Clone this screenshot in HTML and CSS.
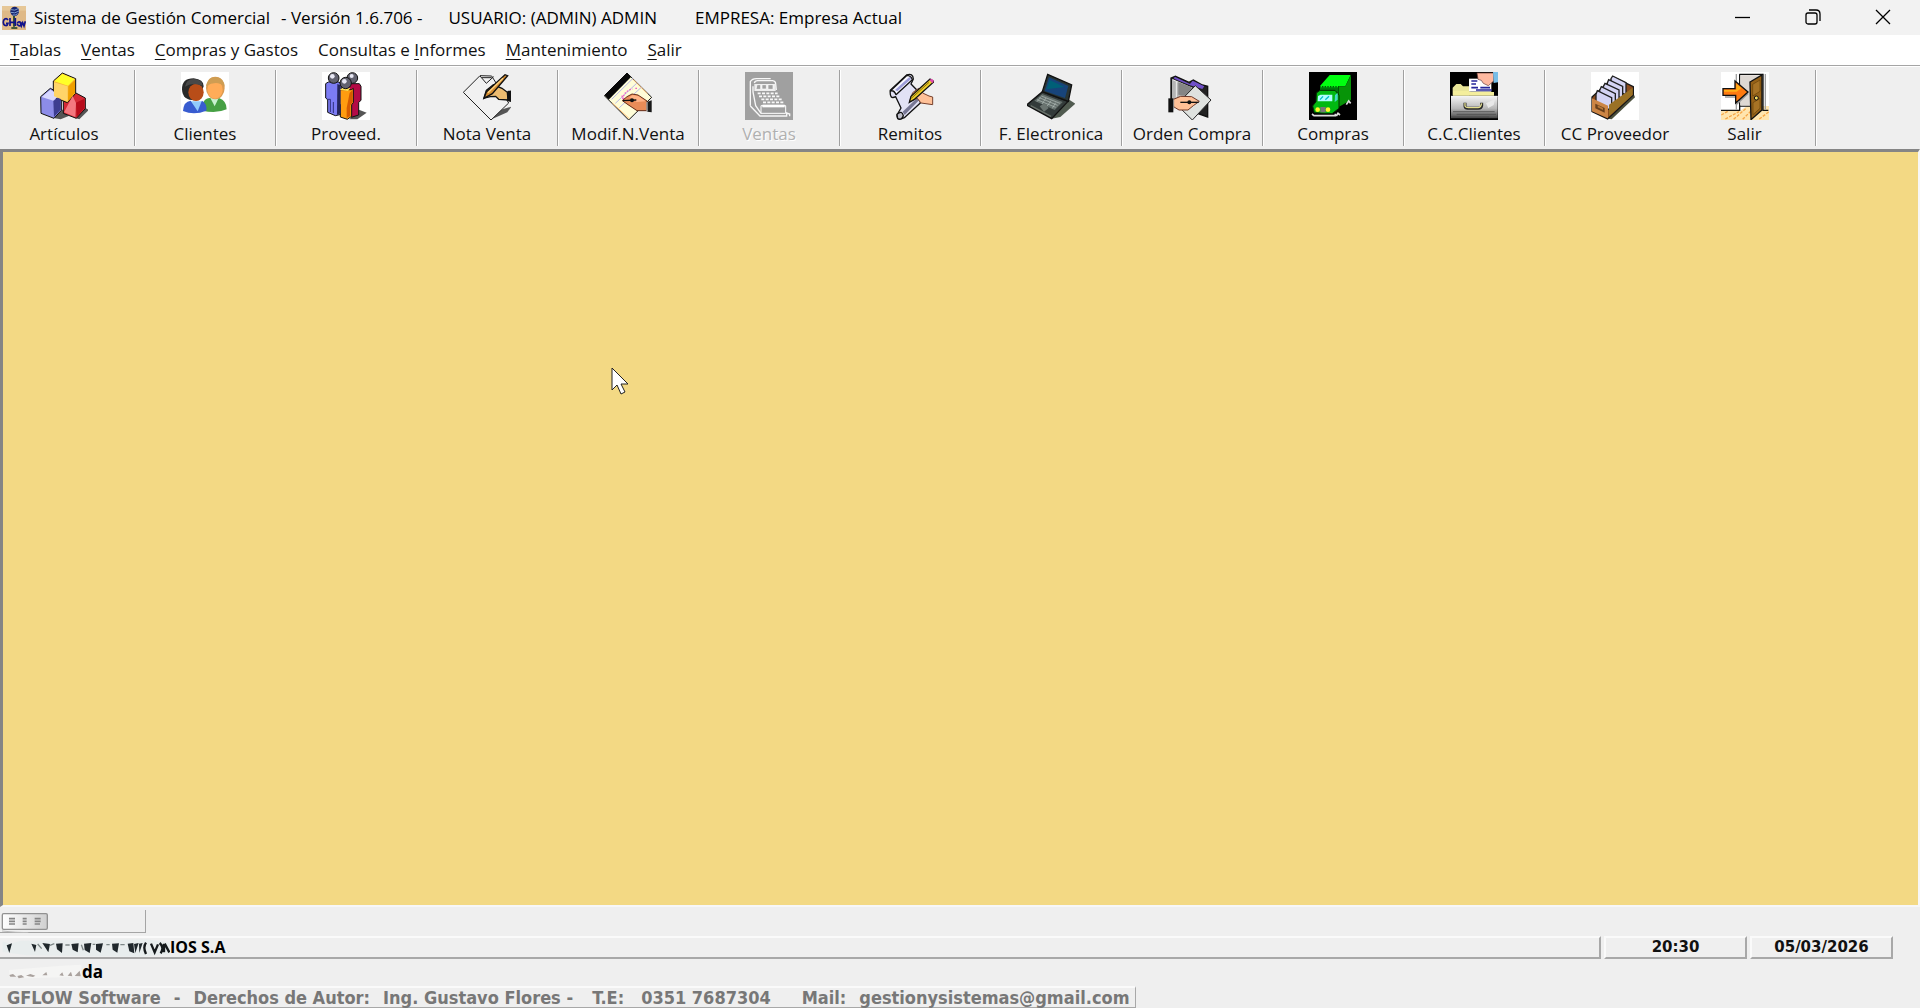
FILE: index.html
```html
<!DOCTYPE html>
<html lang="es">
<head>
<meta charset="utf-8">
<title>Sistema de Gestión Comercial</title>
<link rel="stylesheet" href="styles.css">
</head>
<body>
<div class="window">
  <header class="titlebar">
    <svg class="app-icon" viewBox="0 0 72 72" aria-hidden="true">
      <rect width="72" height="72" fill="#dfb987"/>
      <path d="M0 0H72V14H0Z" fill="#e6c797"/>
      <ellipse cx="38" cy="16" rx="13" ry="14" fill="#16246e"/>
      <path d="M27 11Q38 16 50 7M26 19Q38 24 51 15M32 27Q40 29 47 23" fill="none" stroke="#7c9cd0" stroke-width="3"/>
      <path d="M36 30V62M28 66H46" stroke="#143c22" stroke-width="5"/>
      <path d="M18 42C12 34 3 40 4 50S16 62 18 52H12M24 36V60M24 49H38M40 36V60M46 54A6 6 0 1 0 46 53M54 47L58 60L62 50L66 60L70 46" fill="none" stroke="#10128c" stroke-width="5"/>
    </svg>
    <h1 class="title"><span>Sistema de Gestión Comercial</span><span class="version">- Versión 1.6.706 -</span><span class="user">USUARIO: (ADMIN) ADMIN</span><span>EMPRESA: Empresa Actual</span></h1>
    <div class="window-controls">
      <button type="button" aria-label="Minimizar"><svg viewBox="0 0 16 16"><path d="M0 8.500H15"/></svg></button>
      <button type="button" aria-label="Restaurar"><svg viewBox="0 0 16 16"><rect x="1" y="4" width="11" height="11" rx="2"/><path d="M4 1H11Q15 1 15 5V12"/></svg></button>
      <button type="button" aria-label="Cerrar"><svg viewBox="0 0 16 16"><path d="M1 1L15 15M15 1L1 15"/></svg></button>
    </div>
  </header>

  <nav class="menubar">
    <button type="button"><u>T</u>ablas</button>
    <button type="button"><u>V</u>entas</button>
    <button type="button"><u>C</u>ompras y Gastos</button>
    <button type="button">Consultas e <u>I</u>nformes</button>
    <button type="button"><u>M</u>antenimiento</button>
    <button type="button"><u>S</u>alir</button>
  </nav>

  <div class="toolbar" role="toolbar">
    <button type="button" class="tool first">
      <svg viewBox="120 18 144 144" aria-hidden="true">
        <path d="M160 156L186 130L206 150L182 160ZM226 156L256 126L266 132L238 160Z" fill="#555"/>
        <g stroke="#111" stroke-width="3" stroke-linejoin="round">
          <path d="M122 92L151 67L184 85V133L162 157L123 142Z" fill="#8c8ce8"/>
          <path d="M190 103L222 78L256 96V128L229 157L190 142Z" fill="#d42a36"/>
          <path d="M160 45L187 21L227 38V82L202 110L160 93Z" fill="#f8b838"/>
        </g>
        <path d="M125 93L151 71L180 86L160 104Z" fill="#d8d8ff"/><path d="M160 105L182 88V131L162 153Z" fill="#3c3c90"/>
        <path d="M192 139L218 90L228 111L226 153Z" fill="#f47880"/><path d="M228 110L253 98V127L230 153Z" fill="#b80c1c"/>
        <path d="M163 46L187 24L224 39L204 59Z" fill="#ffff28"/><path d="M162 49L203 61V107L162 91Z" fill="#ffd468"/><path d="M205 61L225 42V80L204 106Z" fill="#f0a000"/>
      </svg><span>Artículos</span></button>
    <button type="button" class="tool">
      <svg viewBox="544 18 144 144" aria-hidden="true">
        <rect x="544" y="18" width="144" height="144" fill="#fff"/>
        <path d="M608 134Q605 98 631 96H658Q681 104 681 130Q650 144 608 134Z" fill="#46a044"/>
        <path d="M632 96L645 121L657 96Z" fill="#c8f0d0"/>
        <ellipse cx="647" cy="66" rx="28" ry="34" fill="#dc9a50"/><ellipse cx="646" cy="71" rx="23" ry="27" fill="#ffac58"/>
        <path d="M619 61Q624 31 650 33Q674 37 675 62Q651 40 619 61Z" fill="#cf9d52"/>
        <path d="M547 71Q546 37 582 37Q612 40 612 61L596 102Q549 107 547 71Z" fill="#292929"/>
        <ellipse cx="589" cy="79" rx="23" ry="26" fill="#b84d18"/>
        <path d="M556 62Q576 47 609 59Q607 39 582 39Q559 40 556 62Z" fill="#484848"/>
        <path d="M550 135Q552 106 573 104L590 124L607 104Q623 113 620 134Q583 149 550 135Z" fill="#385cd0"/>
        <path d="M574 106H606L594 136Z" fill="#92cafc"/>
      </svg><span>Clientes</span></button>
    <button type="button" class="tool">
      <svg viewBox="128 18 144 144" aria-hidden="true">
        <rect x="128" y="18" width="144" height="144" fill="#fff"/>
        <path d="M210 160L239 131L262 140L234 160Z" fill="#555"/>
        <g stroke="#111" stroke-width="3">
          <path d="M203 53H240L245 61V103L238 109V147L216 154Z" fill="#b40a46"/>
          <path d="M139 53L147 48H179L186 56V145L168 149L145 139V101L139 96Z" fill="#7c7cf4"/>
          <path d="M179 71H216L222 67V110L217 116V151L204 160L183 153V116L179 111Z" fill="#ff9c10"/>
        </g>
        <path d="M174 54L184 58V142L173 147Z" fill="#26265c"/>
        <path d="M143 100H153V138M162 108V141" fill="none" stroke="#30307c" stroke-width="3"/>
        <path d="M181 71L190 66H213L206 75Z" fill="#ffe054"/><path d="M211 80L220 72V108L213 118V150L202 156V126Z" fill="#d65c00"/>
        <g fill="#626270" stroke="#111" stroke-width="3"><circle cx="163" cy="36" r="16"/><circle cx="219" cy="36" r="16"/><circle cx="199" cy="51" r="17"/></g>
        <g fill="#e8e8f4"><circle cx="159" cy="31" r="7"/><circle cx="217" cy="30" r="6"/><circle cx="195" cy="46" r="7"/></g>
      </svg><span>Proveed.</span></button>
    <button type="button" class="tool">
      <svg viewBox="551 18 144 144" aria-hidden="true">
        <path d="M640 158L662 132L696 122L684 139Z" fill="#555"/>
        <path d="M552 79L602 29L637 30L688 111L635 162Z" fill="#f1f1f1" stroke="#222" stroke-width="3"/>
        <path d="M602 30L621 52L643 32M607 35H637" fill="none" stroke="#222" stroke-width="3"/>
        <path d="M614 96L621 73L642 56L668 67L684 79L686 102L658 100L649 91L633 92Z" fill="#edbc70" stroke="#111" stroke-width="4"/>
        <path d="M684 75L696 73V108L684 105Z" fill="#111"/>
        <path d="M614 97L621 78L677 26L685 29L639 83Z" fill="#d58c30" stroke="#111" stroke-width="4"/>
        <path d="M626 80L671 37" stroke="#ffd480" stroke-width="4"/>
      </svg><span>Nota Venta</span></button>
    <button type="button" class="tool">
      <svg viewBox="135 18 144 144" aria-hidden="true">
        <path d="M136 89L204 21L278 94L209 162Z" fill="#fffdd8" stroke="#111" stroke-width="3"/>
        <path d="M137 88L204 21L216 33L149 101Z" fill="#080808"/>
        <path d="M158 100L222 37M169 112L235 50M181 125L249 62" stroke="#b8b8e8" stroke-width="3"/>
        <path d="M160 111L211 158M222 40L265 83" stroke="#ffc078" stroke-width="3"/>
        <path d="M191 100Q194 75 221 69M229 67H237M188 89L199 103" fill="none" stroke="#ed62c8" stroke-width="4" stroke-dasharray="5 4"/>
        <path d="M190 104L204 92L219 84L237 87L264 105V134L234 134L207 116Z" fill="#e98c58" stroke="#642c18" stroke-width="3"/>
        <path d="M211 94L221 87L239 91L260 106L233 108Z" fill="#ffb286"/><path d="M192 104L232 102" stroke="#111" stroke-width="4"/><circle cx="219" cy="103" r="6" fill="#111"/>
        <path d="M264 108L278 103V139L265 137Z" fill="#181818"/><path d="M264 108V136" stroke="#aaa" stroke-width="4"/>
      </svg><span>Modif.N.Venta</span></button>
    <button type="button" class="tool" disabled>
      <svg viewBox="558 18 144 144" aria-hidden="true">
        <rect x="558" y="18" width="144" height="144" fill="#a0a0a0"/>
        <path d="M574 119V47Q579 38 592 38H635M586 51Q588 44 596 44H641Q650 45 650 54L652 72M582 61V78L590 119L606 142M574 120L603 150H683V141L692 144V151" fill="none" stroke="#f8f8f8" stroke-width="4"/>
        <path d="M586 54H650V75H586Z" fill="#ededed"/><path d="M594 56H605V70H591ZM609 56H622V69H609ZM627 56H642V70H627Z" fill="#a0a0a0" stroke="#fff" stroke-width="2"/>
        <path d="M596 82H656M600 91H663M607 100H671M612 109H676" stroke="#f8f8f8" stroke-width="5" stroke-dasharray="9 4"/>
        <path d="M606 119H680V142H606Z" fill="#a0a0a0" stroke="#fff" stroke-width="3"/><path d="M610 120H677" stroke="#fff" stroke-width="8"/>
      </svg><span>Ventas</span></button>
    <button type="button" class="tool">
      <svg viewBox="141 18 144 144" aria-hidden="true">
        <g stroke="#111" stroke-width="4" stroke-linejoin="round">
          <path d="M154 73L203 27Q222 20 223 39L216 54L240 79L244 111L196 155Q174 166 174 147L186 126L170 92Q151 102 154 73Z" fill="#e2e2f5"/>
          <path d="M154 75L204 28Q216 29 220 41L171 86Q165 71 154 75Z" fill="#f8f8ff"/>
          <path d="M174 145Q189 131 193 149Q188 164 176 158Z" fill="#bdbdc8"/>
        </g>
        <path d="M168 72L211 33L217 38L175 76Z" fill="#9d9dd9"/><path d="M191 137L240 91V103L197 147Z" fill="#777794"/>
        <path d="M212 106L221 80L239 67L251 81L270 90L281 93V116L246 111L235 97Z" fill="#ffc198" stroke="#75402d" stroke-width="3"/>
        <path d="M211 109L216 91L273 39L285 47L225 101Z" fill="#edce26" stroke="#111" stroke-width="4"/>
        <path d="M271 42L278 38L285 44L280 52Z" fill="#e049ad"/><path d="M217 97L270 49" stroke="#8c6c10" stroke-width="3"/>
      </svg><span>Remitos</span></button>
    <button type="button" class="tool">
      <svg viewBox="564 18 144 144" aria-hidden="true">
        <path d="M638 158L691 101L709 113L664 153Z" fill="#515b50"/>
        <path d="M563 117L610 77L687 106L638 158Z" fill="#333b3a" stroke="#111" stroke-width="4"/>
        <path d="M610 77L626 25L698 57L688 106Z" fill="#293534" stroke="#111" stroke-width="4"/>
        <path d="M617 75L630 34L688 60L678 96Z" fill="#17447a"/><path d="M622 70L632 42L676 63Z" fill="#006077"/>
        <path d="M586 104L610 84L671 108L647 132Z" fill="#65706d"/>
        <path d="M594 101L650 124M601 95L656 118M607 90L663 112M605 94L594 107M621 96L609 114M636 104L624 121M650 110L640 127" stroke="#b4beb9" stroke-width="2"/>
        <path d="M602 121L616 112L629 126L615 137Z" fill="#6a7470"/><path d="M575 119L636 151" stroke="#69716a" stroke-width="4"/>
      </svg><span>F. Electronica</span></button>
    <button type="button" class="tool">
      <svg viewBox="147 18 144 144" aria-hidden="true">
        <path d="M156 36L169 31L210 49L223 42L250 57L266 61V153L214 135L156 111Z" fill="#222" stroke="#111" stroke-width="4"/>
        <path d="M159 39L218 68L221 137L159 110Z" fill="#b5b5b5"/><path d="M167 32L213 54L221 44L256 61L250 69L213 58L165 38Z" fill="#7050c8"/>
        <path d="M172 46V95M161 41L221 67" stroke="#eee" stroke-width="3"/>
        <path d="M178 48L216 63V92L178 86Z" fill="#858585"/>
        <path d="M229 59L276 102L220 162L173 116Z" fill="#dfe2df" stroke="#292929" stroke-width="3"/>
        <path d="M161 101L185 91L218 92L241 106L223 119L207 132L180 132L162 121Z" fill="#ffc096" stroke="#6e3828" stroke-width="3"/>
        <path d="M184 109H239" stroke="#111" stroke-width="4"/><circle cx="211" cy="109" r="6" fill="#111"/><path d="M148 97H163V139H148Z" fill="#111"/><path d="M164 100V130" stroke="#888" stroke-width="3"/>
      </svg><span>Orden Compra</span></button>
    <button type="button" class="tool">
      <svg viewBox="571 18 144 144" aria-hidden="true">
        <rect x="571" y="18" width="144" height="144" fill="#000"/>
        <path d="M604 60L633 27H696L680 61Z" fill="#00ff10"/><path d="M661 61H680L697 27V102L661 122Z" fill="#079408"/>
        <path d="M604 61H660V112H604Z" fill="#007a0b"/><path d="M606 62H658" stroke="#00f610" stroke-width="4" stroke-dasharray="4 4"/>
        <path d="M593 81L604 73H649L661 87V127L640 143L587 140L582 120L592 107Z" fill="#00b911" stroke="#002c00" stroke-width="3"/>
        <path d="M598 90L606 86H641V106H597Z" fill="#afffff"/><path d="M604 101L613 91M620 101L631 91" stroke="#00bcc8" stroke-width="4"/>
        <path d="M649 87L657 81V101L648 108Z" fill="#42d8c4"/><path d="M605 123H621V139H605Z" fill="#777"/>
        <circle cx="597" cy="131" r="7" fill="#fff82b"/><circle cx="628" cy="131" r="7" fill="#fff82b"/>
        <path d="M580 144L586 149H650V143M653 150L658 142L664 147M683 116L690 105L696 112" fill="none" stroke="#ddd" stroke-width="5"/>
      </svg><span>Compras</span></button>
    <button type="button" class="tool">
      <svg viewBox="154 18 144 144" aria-hidden="true">
        <defs><linearGradient id="drawer" x2="0" y2="1"><stop stop-color="#f3f3f3"/><stop offset=".55" stop-color="#b7b7b7"/><stop offset="1" stop-color="#454545"/></linearGradient></defs>
        <rect x="154" y="18" width="144" height="144" fill="#000"/>
        <path d="M162 88V65L173 54H186L193 61H211V88Z" fill="#e9e598"/>
        <path d="M211 38H278V77H211Z" fill="#fff"/><path d="M218 45H236M218 54H232M218 65H238M245 65H274M232 72H280" stroke="#26269a" stroke-width="5"/>
        <path d="M235 21H285V45L269 59L254 52L248 43L238 40Z" fill="#ffb9a0" stroke="#603432" stroke-width="2"/><path d="M283 18H298V49L285 51Z" fill="#77bde7"/>
        <path d="M163 75H209L217 78H286V89H163Z" fill="#f4ee9c"/>
        <path d="M157 91H297V157H157Z" fill="url(#drawer)"/><path d="M157 91H297" stroke="#fff" stroke-width="3"/>
        <path d="M163 137H288M174 145H292M157 153H272" stroke="#444" stroke-width="2"/><path d="M262 112L289 99L285 117L269 126Z" fill="#e8e8e8"/>
        <path d="M199 110V121Q200 127 207 127H239Q248 127 249 119V110" fill="none" stroke="#292929" stroke-width="9"/><path d="M199 111V120Q201 125 209 125H238Q246 125 249 112" fill="none" stroke="#e4df90" stroke-width="4"/>
      </svg><span>C.C.Clientes</span></button>
    <button type="button" class="tool plain">
      <svg viewBox="577 18 144 144" aria-hidden="true">
        <rect x="577" y="18" width="144" height="144" fill="#fff"/>
        <path d="M626 158L704 82L709 94L639 160Z" fill="#4c503c"/>
        <path d="M580 93L646 34L704 62V87L627 159L580 137Z" fill="#8b4c1e" stroke="#181818" stroke-width="4"/>
        <g fill="#d4d4f4" stroke="#202020" stroke-width="4">
          <path d="M637 38L642 30L682 50V86L638 69Z"/><path d="M626 51L630 41L672 61V97L626 80Z"/><path d="M614 62L619 52L661 72V108L614 91Z"/><path d="M603 73L608 62L650 83V119L603 102Z"/><path d="M592 85L596 74L639 95V133L592 116Z"/>
        </g>
        <path d="M580 97L628 119V157L580 136Z" fill="#cc8545"/><path d="M631 116L702 65V87L631 151Z" fill="#9a7125"/>
        <path d="M590 113L618 126V140L590 127Z" fill="#69401c"/><path d="M597 118L613 126V132L597 124Z" fill="#b87838"/>
      </svg><span>CC Proveedor</span></button>
    <button type="button" class="tool last">
      <svg viewBox="244 216 144 144" aria-hidden="true">
        <rect x="244" y="216" width="144" height="144" fill="#fff"/>
        <path d="M244 333H300L322 318H388V360H244Z" fill="#ffe5ae"/><path d="M245 345L266 333M257 357L298 335M282 358L319 325M309 358L333 334M359 357L387 336" stroke="#f6a646" stroke-width="4" stroke-dasharray="9 4"/>
        <path d="M299 223H370V331H386M244 331H300V223M300 318H331" fill="none" stroke="#111" stroke-width="4"/>
        <path d="M302 226H366L332 249V317H302Z" fill="#ded8d3"/><path d="M290 222V329M377 222V329" stroke="#a1a1a1" stroke-width="4"/>
        <path d="M331 246L367 225V330L334 359Z" fill="#966218" stroke="#111" stroke-width="4"/>
        <path d="M339 253L361 240V274L339 288ZM340 308L361 295V325L340 344Z" fill="#a77325" stroke="#68430b" stroke-width="2"/><circle cx="350" cy="294" r="6" fill="#f4dc62" stroke="#111" stroke-width="3"/>
        <path d="M256 291H288L291 312L325 280" fill="none" stroke="#999" stroke-width="5"/>
        <path d="M250 266H286V243L325 276L288 309V286H250Z" fill="#ff7a10" stroke="#111" stroke-width="4"/><path d="M253 270H290V252L305 264L291 275H253Z" fill="#ffb018"/>
      </svg><span>Salir</span></button>
  </div>

  <main class="workspace">
    <svg class="cursor" viewBox="0 0 18 28" aria-hidden="true"><path d="M1 1V23L6 18L10 27L14 25L10 17H17Z" fill="#fff" stroke="#222" stroke-width="1"/></svg>
  </main>

  <footer class="status">
    <div class="status-tab">
      <svg viewBox="0 0 144 69" aria-hidden="true">
        <defs><linearGradient id="tab" x2="1" y2="0"><stop stop-color="#fff"/><stop offset="1" stop-color="#d0d0d0"/></linearGradient></defs>
        <rect x="7" y="11" width="135" height="47" rx="4" fill="url(#tab)" stroke="#929292" stroke-width="4"/>
        <path d="M27 26H45M27 34H45M27 42H45M68 26H80M68 34H80M68 42H80M104 26H122M104 34H122M104 42H120" stroke="#858585" stroke-width="5"/><path d="M6 63Q50 68 85 68" fill="none" stroke="#bbb" stroke-width="3"/>
      </svg>
    </div>
    <div class="status-row">
      <div class="panel company">
        <svg viewBox="0 0 510 57" aria-hidden="true">
          <path d="M8 10L30 18L60 8L440 4L510 14V49L420 56L80 52L8 42Z" fill="#e8eded"/>
          <path d="M20 22L36 16L28 45ZM94 17L109 21L105 42ZM127 15L150 18L145 43ZM168 17L188 16L186 45L171 34ZM214 18L236 16L233 43L218 35ZM252 17L274 15L269 45L254 36ZM288 18L309 16L302 44L288 35ZM336 17L357 16L352 44L338 35ZM383 17L400 15L403 46L388 40ZM402 18L416 15L406 45ZM417 17L428 15L418 45Z" fill="#20282c"/>
          <path d="M438 14Q428 28 438 48M453 17L464 43L474 19M479 15Q494 28 482 46M492 17V43M494 17L508 43" fill="none" stroke="#15191b" stroke-width="7"/>
          <path d="M113 18L125 32M150 22L163 17M196 21H209M244 20L250 37M278 19H286M319 20H329M361 20H374" stroke="#7d8787" stroke-width="4"/>
        </svg><span>IOS S.A</span>
      </div>
      <div class="panel clock">20:30</div>
      <div class="panel clock">05/03/2026</div>
    </div>
    <div class="branch">
      <svg viewBox="0 0 246 54" aria-hidden="true"><path d="M27 24L185 11L244 8V44L77 49L29 42Z" fill="#f5f5f4"/><path d="M28 39L39 36L49 44L31 44ZM52 42L64 39L73 46L56 49ZM78 41L91 36L106 41L99 45ZM127 40L139 30L142 40ZM178 40L187 31L191 42ZM203 41L213 29L217 43ZM224 42L239 26L242 43Z" fill="#aaa29e"/></svg><span>da</span>
    </div>
    <div class="credits"><span>GFLOW Software</span><span>-</span><span>Derechos de Autor:</span><span>Ing. Gustavo Flores -</span><span class="phone">T.E:</span><span class="number">0351 7687304</span><span class="mail">Mail:</span><span>gestionysistemas@gmail.com</span></div>
  </footer>
</div>
</body>
</html>
```
FILE: styles.css
```css
* { box-sizing: border-box; }
body { margin: 0; background: #efefef; color: #111; font: 17px/20px "Open Sans", "Noto Sans", sans-serif; }
button { border: 0; padding: 0; margin: 0; background: none; color: inherit; font: inherit; }
svg { display: block; flex: none; }
.window { min-height: 100vh; display: flex; flex-direction: column; overflow: hidden; }

.titlebar { height: 35px; flex: none; display: flex; align-items: center; padding-left: 2px; background: #f2f2f2; }
.app-icon { width: 24px; height: 24px; }
.title { flex: 1; display: flex; margin: 0 0 0 8px; font-size: 17px; line-height: 24px; font-weight: 400; white-space: nowrap; color: #000; }
.version { margin: 0 26px 0 11px; }
.user { margin-right: 38px; }
.window-controls { display: flex; height: 35px; padding: 0 2px 2px 0; }
.window-controls button { width: 70px; display: flex; align-items: center; justify-content: center; }
.window-controls svg { width: 16px; height: 16px; fill: none; stroke: #000; stroke-width: 1.3; }

.menubar { height: 30px; flex: none; display: flex; align-items: center; gap: 20px; padding: 0 10px; background: #fff; white-space: nowrap; }
.menubar u { text-underline-offset: 3px; text-decoration-thickness: 1px; }

.toolbar { height: 84px; flex: none; display: flex; padding: 4px 0 3px; border-top: 1px solid #a5a5a5; box-shadow: inset 0 1px #fff; white-space: nowrap; }
.tool { width: 141px; flex: none; display: flex; flex-direction: column; align-items: center; gap: 4px; padding-top: 2px; border-right: 1px solid #a0a0a0; box-shadow: 1px 0 #fff; }
.tool svg { width: 48px; height: 48px; }
.first { width: 135px; padding-right: 6px; }
.plain { border-right-color: transparent; box-shadow: none; }
.last { width: 130px; padding-right: 12px; }
.tool:disabled { color: #b0b0b0; text-shadow: 1px 1px #fff; }

.workspace { position: relative; flex: 1; background: #f3d984; border: solid; border-width: 3px 2px 2px 3px; border-color: #858585 #f7f7f7 #f7f7f7 #858585; }
.cursor { position: absolute; left: 608px; top: 215px; width: 18px; height: 28px; }

.status { flex: none; display: flex; flex-direction: column; align-items: flex-start; padding-top: 3px; white-space: nowrap; }
.status-tab { width: 146px; height: 23px; border: solid #a5a5a5; border-width: 0 1px 1px 0; }
.status-tab svg { width: 48px; height: 23px; }
.status-row { width: 100%; display: flex; gap: 3px; margin-top: 3px; padding-right: 27px; font: bold 15px/19px "DejaVu Sans", sans-serif; }
.panel { height: 23px; border: 2px solid; border-color: #fafafa #a8a8a8 #a8a8a8 #fafafa; }
.company { flex: 1; display: flex; border-left: 0; font: bold 16px/18px "Open Sans", sans-serif; color: #000; }
.company svg { width: 170px; height: 19px; }
.clock { width: 143px; text-align: center; }
.branch { display: flex; height: 27px; padding-top: 3px; font-weight: 700; color: #000; }
.branch svg { width: 82px; height: 18px; }
.credits { display: flex; height: 22px; padding: 0 5px 0 7px; border: solid; border-width: 2px 1px 1px 0; border-color: #fafafa #a8a8a8 #a8a8a8; color: #777; font: bold 18px/20px "DejaVu Sans Condensed", "DejaVu Sans", sans-serif; gap: 13px; }
.phone { margin-left: 6px; }
.number { margin-left: 4px; }
.mail { margin-left: 18px; }
```
